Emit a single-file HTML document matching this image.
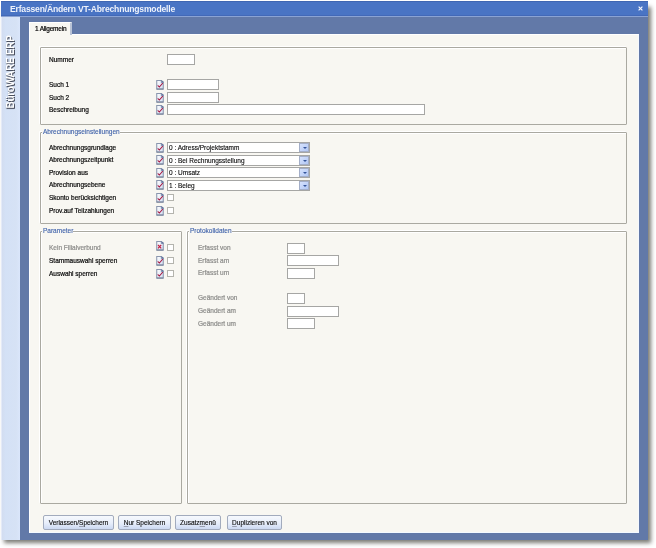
<!DOCTYPE html>
<html><head><meta charset="utf-8">
<style>
*{margin:0;padding:0;box-sizing:border-box}
html,body{width:656px;height:548px;overflow:hidden;background:#fff;font-family:"Liberation Sans",sans-serif}
#root{position:absolute;left:0;top:0;width:656px;height:548px;will-change:transform}
.l,.lg,#tab .t{-webkit-text-stroke-width:0.2px}
.cmb .t{-webkit-text-stroke-width:0.12px}
.btn{-webkit-text-stroke-width:0.12px}
.a{position:absolute}
#shadow{left:4px;top:7px;width:647px;height:536px;background:rgba(40,40,30,.62);filter:blur(2px)}
#win{left:1px;top:1px;width:647px;height:539px;background:#6279a8}
#title{left:1px;top:1px;width:647px;height:15px;background:#4974c4;border-top:1px solid #3f66b2;box-shadow:inset 0 -1px 0 #4269b8}
#title .t{left:9px;top:2px;font-size:8.6px;font-weight:bold;color:#eef2fb;letter-spacing:-0.2px;white-space:nowrap;line-height:11px}
#close{left:637px;top:5px;width:7px;height:7px}
#tline{left:1px;top:16px;width:647px;height:1px;background:#8aa3d4}
#side{left:1px;top:17px;width:19px;height:523px;background:linear-gradient(90deg,#d3dcef,#d4e1f6 25%,#d6e2f5 80%,#dae6fb)}
#side{box-shadow:inset 1px 0 0 #e4eaf8}
#sidetext{left:-27px;top:50px;width:73px;height:10px;transform:rotate(-90deg);font-size:10px;letter-spacing:-0.3px;font-weight:bold;color:#fff;text-shadow:-1px 1px 0 #4a5060,-1px 0 1px #707888;white-space:nowrap;line-height:10px;text-align:center}
#tab{left:29px;top:22px;width:43px;height:13px;background:#f8f7f2;border-top:1px solid #fff;border-left:1px solid #fff;border-right:2px solid #b9c3d6}
#tab .t{left:5px;top:2px;font-size:6.5px;color:#000;letter-spacing:-0.2px;line-height:8px;white-space:nowrap}
#panel{left:29px;top:34px;width:610px;height:499px;background:#f8f7f2;border-top:1px solid #fff;border-right:1px solid #f4f8ff;border-bottom:1px solid #f4faff;border-left:1px solid #fff}
.box{position:absolute;border:1px solid #aaa9a1;border-radius:1px;box-shadow:inset 1px 1px 0 #fff,-1px -1px 0 #fff}
.lg{position:absolute;font-size:6.5px;color:#3a5ea8;background:#f8f7f2;line-height:8px;white-space:nowrap;padding:0 0 0 1px;-webkit-text-stroke-width:0.1px !important}
.l{position:absolute;font-size:6.5px;color:#0a0a0a;line-height:8px;white-space:nowrap}
.g{color:#8c8c8a}
.in{position:absolute;background:#fff;border:1px solid #a6a6a4}
.cb{position:absolute;background:#fff;border:1px solid #b4b4ae}
.cmb{position:absolute;background:#fff;border:1px solid #a6a6a4}
.cmb .t{position:absolute;left:1px;top:1px;font-size:6.5px;line-height:8px;color:#0a0a0a;white-space:nowrap}
.cmb .dd{position:absolute;right:0;top:0;width:10px;height:100%;background:linear-gradient(135deg,#d6e2fd,#b2c7f4);border:1px solid #a3aec8}
.cmb .dd:after{content:"";position:absolute;left:2.5px;top:3px;border-left:2.2px solid transparent;border-right:2.2px solid transparent;border-top:2.2px solid #34549a}
.ic{position:absolute;width:8px;height:9.6px;overflow:visible}
.btn{position:absolute;top:515px;height:15px;border:1px solid #a2abbd;border-radius:2px;background:linear-gradient(#f6f9fe 0%,#e8eefa 55%,#ccd9f2 100%);font-size:6.5px;line-height:14px;text-align:center;color:#0a0a0a;white-space:nowrap}
.btn u{text-decoration:underline;text-decoration-color:#9aa0b0;text-decoration-thickness:0.5px}
</style></head><body><div id="root">
<div id="shadow" class="a"></div>
<div id="win" class="a"></div>
<div id="title" class="a"><div class="t a">Erfassen/Ändern VT-Abrechnungsmodelle</div></div>
<svg id="close" class="a" viewBox="0 0 7 7"><path d="M1.6 1.6L5.4 5.4M5.4 1.6L1.6 5.4" stroke="#f4f6fc" stroke-width="1.2"/></svg>
<div id="tline" class="a"></div>
<div id="side" class="a"><div id="sidetext" class="a">BüroWARE ERP</div></div>
<div id="panel" class="a"></div>
<div id="tab" class="a"><div class="t a">1 Allgemein</div></div>

<!-- Box 1 -->
<div class="box" style="left:40px;top:47px;width:587px;height:78px"></div>
<div class="l" style="left:49px;top:56px">Nummer</div>
<div class="in" style="left:167px;top:54px;width:28px;height:11px"></div>
<div class="l" style="left:49px;top:81px">Such 1</div>
<div class="in" style="left:167px;top:79px;width:52px;height:11px"></div>
<div class="l" style="left:49px;top:94px">Such 2</div>
<div class="in" style="left:167px;top:92px;width:52px;height:11px"></div>
<div class="l" style="left:49px;top:106px">Beschreibung</div>
<div class="in" style="left:167px;top:104px;width:258px;height:11px"></div>

<!-- Box 2 -->
<div class="box" style="left:40px;top:132px;width:587px;height:92px"></div>
<div class="lg" style="left:42px;top:128px">Abrechnungseinstellungen</div>
<div class="l" style="left:49px;top:144px">Abrechnungsgrundlage</div>
<div class="cmb" style="left:167px;top:142px;width:143px;height:11px"><div class="t">0 : Adress/Projektstamm</div><div class="dd"></div></div>
<div class="l" style="left:49px;top:156px">Abrechnungszeitpunkt</div>
<div class="cmb" style="left:167px;top:155px;width:143px;height:11px"><div class="t">0 : Bei Rechnungsstellung</div><div class="dd"></div></div>
<div class="l" style="left:49px;top:169px">Provision aus</div>
<div class="cmb" style="left:167px;top:167px;width:143px;height:11px"><div class="t">0 : Umsatz</div><div class="dd"></div></div>
<div class="l" style="left:49px;top:181px">Abrechnungsebene</div>
<div class="cmb" style="left:167px;top:180px;width:143px;height:11px"><div class="t">1 : Beleg</div><div class="dd"></div></div>
<div class="l" style="left:49px;top:194px">Skonto berücksichtigen</div>
<div class="cb" style="left:167px;top:194px;width:7px;height:7px"></div>
<div class="l" style="left:49px;top:207px">Prov.auf Teilzahlungen</div>
<div class="cb" style="left:167px;top:207px;width:7px;height:7px"></div>

<!-- Box 3 Parameter -->
<div class="box" style="left:40px;top:231px;width:142px;height:273px"></div>
<div class="lg" style="left:42px;top:227px">Parameter</div>
<div class="l g" style="left:49px;top:244px">Kein Filialverbund</div>
<div class="cb" style="left:167px;top:244px;width:7px;height:7px"></div>
<div class="l" style="left:49px;top:257px">Stammauswahl sperren</div>
<div class="cb" style="left:167px;top:257px;width:7px;height:7px"></div>
<div class="l" style="left:49px;top:270px">Auswahl sperren</div>
<div class="cb" style="left:167px;top:270px;width:7px;height:7px"></div>

<!-- Box 4 Protokolldaten -->
<div class="box" style="left:187px;top:231px;width:440px;height:273px"></div>
<div class="lg" style="left:189px;top:227px">Protokolldaten</div>
<div class="l g" style="left:198px;top:244px">Erfasst von</div>
<div class="in" style="left:287px;top:243px;width:18px;height:11px"></div>
<div class="l g" style="left:198px;top:257px">Erfasst am</div>
<div class="in" style="left:287px;top:255px;width:52px;height:11px"></div>
<div class="l g" style="left:198px;top:269px">Erfasst um</div>
<div class="in" style="left:287px;top:268px;width:28px;height:11px"></div>
<div class="l g" style="left:198px;top:294px">Geändert von</div>
<div class="in" style="left:287px;top:293px;width:18px;height:11px"></div>
<div class="l g" style="left:198px;top:307px">Geändert am</div>
<div class="in" style="left:287px;top:306px;width:52px;height:11px"></div>
<div class="l g" style="left:198px;top:320px">Geändert um</div>
<div class="in" style="left:287px;top:318px;width:28px;height:11px"></div>

<!-- icons -->
<svg class="ic" style="left:156px;top:80px" viewBox="0 0 8 10"><defs><linearGradient id="dg0" x1="0" y1="0" x2="1" y2="1"><stop offset="0" stop-color="#ffffff"/><stop offset="1" stop-color="#d2ddf2"/></linearGradient></defs><path d="M0.6 0.6H5.4L7.4 2.6V9.4H0.6Z" fill="url(#dg0)" stroke="#8a96ae" stroke-width="1.1"/><path d="M5.2 0.4L7.6 2.8V1.2Z" fill="#5c6e98"/><path d="M5.4 0.6V2.6H7.4" fill="none" stroke="#6c7ea6" stroke-width="0.9"/><path d="M0.4 9.5H7.6" stroke="#6c7890" stroke-width="1"/><path d="M1.9 5.9L3.3 7.3L6.6 3.6" fill="none" stroke="#a81c44" stroke-width="1.05" stroke-linecap="round"/></svg>
<svg class="ic" style="left:156px;top:92.5px" viewBox="0 0 8 10"><defs><linearGradient id="dg1" x1="0" y1="0" x2="1" y2="1"><stop offset="0" stop-color="#ffffff"/><stop offset="1" stop-color="#d2ddf2"/></linearGradient></defs><path d="M0.6 0.6H5.4L7.4 2.6V9.4H0.6Z" fill="url(#dg1)" stroke="#8a96ae" stroke-width="1.1"/><path d="M5.2 0.4L7.6 2.8V1.2Z" fill="#5c6e98"/><path d="M5.4 0.6V2.6H7.4" fill="none" stroke="#6c7ea6" stroke-width="0.9"/><path d="M0.4 9.5H7.6" stroke="#6c7890" stroke-width="1"/><path d="M1.9 5.9L3.3 7.3L6.6 3.6" fill="none" stroke="#a81c44" stroke-width="1.05" stroke-linecap="round"/></svg>
<svg class="ic" style="left:156px;top:105px" viewBox="0 0 8 10"><defs><linearGradient id="dg2" x1="0" y1="0" x2="1" y2="1"><stop offset="0" stop-color="#ffffff"/><stop offset="1" stop-color="#d2ddf2"/></linearGradient></defs><path d="M0.6 0.6H5.4L7.4 2.6V9.4H0.6Z" fill="url(#dg2)" stroke="#8a96ae" stroke-width="1.1"/><path d="M5.2 0.4L7.6 2.8V1.2Z" fill="#5c6e98"/><path d="M5.4 0.6V2.6H7.4" fill="none" stroke="#6c7ea6" stroke-width="0.9"/><path d="M0.4 9.5H7.6" stroke="#6c7890" stroke-width="1"/><path d="M1.9 5.9L3.3 7.3L6.6 3.6" fill="none" stroke="#a81c44" stroke-width="1.05" stroke-linecap="round"/></svg>
<svg class="ic" style="left:156px;top:142.5px" viewBox="0 0 8 10"><defs><linearGradient id="dg3" x1="0" y1="0" x2="1" y2="1"><stop offset="0" stop-color="#ffffff"/><stop offset="1" stop-color="#d2ddf2"/></linearGradient></defs><path d="M0.6 0.6H5.4L7.4 2.6V9.4H0.6Z" fill="url(#dg3)" stroke="#8a96ae" stroke-width="1.1"/><path d="M5.2 0.4L7.6 2.8V1.2Z" fill="#5c6e98"/><path d="M5.4 0.6V2.6H7.4" fill="none" stroke="#6c7ea6" stroke-width="0.9"/><path d="M0.4 9.5H7.6" stroke="#6c7890" stroke-width="1"/><path d="M1.9 5.9L3.3 7.3L6.6 3.6" fill="none" stroke="#a81c44" stroke-width="1.05" stroke-linecap="round"/></svg>
<svg class="ic" style="left:156px;top:155px" viewBox="0 0 8 10"><defs><linearGradient id="dg4" x1="0" y1="0" x2="1" y2="1"><stop offset="0" stop-color="#ffffff"/><stop offset="1" stop-color="#d2ddf2"/></linearGradient></defs><path d="M0.6 0.6H5.4L7.4 2.6V9.4H0.6Z" fill="url(#dg4)" stroke="#8a96ae" stroke-width="1.1"/><path d="M5.2 0.4L7.6 2.8V1.2Z" fill="#5c6e98"/><path d="M5.4 0.6V2.6H7.4" fill="none" stroke="#6c7ea6" stroke-width="0.9"/><path d="M0.4 9.5H7.6" stroke="#6c7890" stroke-width="1"/><path d="M1.9 5.9L3.3 7.3L6.6 3.6" fill="none" stroke="#a81c44" stroke-width="1.05" stroke-linecap="round"/></svg>
<svg class="ic" style="left:156px;top:167.5px" viewBox="0 0 8 10"><defs><linearGradient id="dg5" x1="0" y1="0" x2="1" y2="1"><stop offset="0" stop-color="#ffffff"/><stop offset="1" stop-color="#d2ddf2"/></linearGradient></defs><path d="M0.6 0.6H5.4L7.4 2.6V9.4H0.6Z" fill="url(#dg5)" stroke="#8a96ae" stroke-width="1.1"/><path d="M5.2 0.4L7.6 2.8V1.2Z" fill="#5c6e98"/><path d="M5.4 0.6V2.6H7.4" fill="none" stroke="#6c7ea6" stroke-width="0.9"/><path d="M0.4 9.5H7.6" stroke="#6c7890" stroke-width="1"/><path d="M1.9 5.9L3.3 7.3L6.6 3.6" fill="none" stroke="#a81c44" stroke-width="1.05" stroke-linecap="round"/></svg>
<svg class="ic" style="left:156px;top:180px" viewBox="0 0 8 10"><defs><linearGradient id="dg6" x1="0" y1="0" x2="1" y2="1"><stop offset="0" stop-color="#ffffff"/><stop offset="1" stop-color="#d2ddf2"/></linearGradient></defs><path d="M0.6 0.6H5.4L7.4 2.6V9.4H0.6Z" fill="url(#dg6)" stroke="#8a96ae" stroke-width="1.1"/><path d="M5.2 0.4L7.6 2.8V1.2Z" fill="#5c6e98"/><path d="M5.4 0.6V2.6H7.4" fill="none" stroke="#6c7ea6" stroke-width="0.9"/><path d="M0.4 9.5H7.6" stroke="#6c7890" stroke-width="1"/><path d="M1.9 5.9L3.3 7.3L6.6 3.6" fill="none" stroke="#a81c44" stroke-width="1.05" stroke-linecap="round"/></svg>
<svg class="ic" style="left:156px;top:193px" viewBox="0 0 8 10"><defs><linearGradient id="dg7" x1="0" y1="0" x2="1" y2="1"><stop offset="0" stop-color="#ffffff"/><stop offset="1" stop-color="#d2ddf2"/></linearGradient></defs><path d="M0.6 0.6H5.4L7.4 2.6V9.4H0.6Z" fill="url(#dg7)" stroke="#8a96ae" stroke-width="1.1"/><path d="M5.2 0.4L7.6 2.8V1.2Z" fill="#5c6e98"/><path d="M5.4 0.6V2.6H7.4" fill="none" stroke="#6c7ea6" stroke-width="0.9"/><path d="M0.4 9.5H7.6" stroke="#6c7890" stroke-width="1"/><path d="M1.9 5.9L3.3 7.3L6.6 3.6" fill="none" stroke="#a81c44" stroke-width="1.05" stroke-linecap="round"/></svg>
<svg class="ic" style="left:156px;top:205.7px" viewBox="0 0 8 10"><defs><linearGradient id="dg8" x1="0" y1="0" x2="1" y2="1"><stop offset="0" stop-color="#ffffff"/><stop offset="1" stop-color="#d2ddf2"/></linearGradient></defs><path d="M0.6 0.6H5.4L7.4 2.6V9.4H0.6Z" fill="url(#dg8)" stroke="#8a96ae" stroke-width="1.1"/><path d="M5.2 0.4L7.6 2.8V1.2Z" fill="#5c6e98"/><path d="M5.4 0.6V2.6H7.4" fill="none" stroke="#6c7ea6" stroke-width="0.9"/><path d="M0.4 9.5H7.6" stroke="#6c7890" stroke-width="1"/><path d="M1.9 5.9L3.3 7.3L6.6 3.6" fill="none" stroke="#a81c44" stroke-width="1.05" stroke-linecap="round"/></svg>
<svg class="ic" style="left:156px;top:241.3px" viewBox="0 0 8 10"><defs><linearGradient id="dg9" x1="0" y1="0" x2="1" y2="1"><stop offset="0" stop-color="#ffffff"/><stop offset="1" stop-color="#d2ddf2"/></linearGradient></defs><path d="M0.6 0.6H5.4L7.4 2.6V9.4H0.6Z" fill="url(#dg9)" stroke="#8a96ae" stroke-width="1.1"/><path d="M5.2 0.4L7.6 2.8V1.2Z" fill="#5c6e98"/><path d="M5.4 0.6V2.6H7.4" fill="none" stroke="#6c7ea6" stroke-width="0.9"/><path d="M0.4 9.5H7.6" stroke="#6c7890" stroke-width="1"/><path d="M1.9 4L5.3 7.6M5.3 4L1.9 7.6" fill="none" stroke="#c01c40" stroke-width="1.25"/></svg>
<svg class="ic" style="left:156px;top:256px" viewBox="0 0 8 10"><defs><linearGradient id="dg10" x1="0" y1="0" x2="1" y2="1"><stop offset="0" stop-color="#ffffff"/><stop offset="1" stop-color="#d2ddf2"/></linearGradient></defs><path d="M0.6 0.6H5.4L7.4 2.6V9.4H0.6Z" fill="url(#dg10)" stroke="#8a96ae" stroke-width="1.1"/><path d="M5.2 0.4L7.6 2.8V1.2Z" fill="#5c6e98"/><path d="M5.4 0.6V2.6H7.4" fill="none" stroke="#6c7ea6" stroke-width="0.9"/><path d="M0.4 9.5H7.6" stroke="#6c7890" stroke-width="1"/><path d="M1.9 5.9L3.3 7.3L6.6 3.6" fill="none" stroke="#a81c44" stroke-width="1.05" stroke-linecap="round"/></svg>
<svg class="ic" style="left:156px;top:268.7px" viewBox="0 0 8 10"><defs><linearGradient id="dg11" x1="0" y1="0" x2="1" y2="1"><stop offset="0" stop-color="#ffffff"/><stop offset="1" stop-color="#d2ddf2"/></linearGradient></defs><path d="M0.6 0.6H5.4L7.4 2.6V9.4H0.6Z" fill="url(#dg11)" stroke="#8a96ae" stroke-width="1.1"/><path d="M5.2 0.4L7.6 2.8V1.2Z" fill="#5c6e98"/><path d="M5.4 0.6V2.6H7.4" fill="none" stroke="#6c7ea6" stroke-width="0.9"/><path d="M0.4 9.5H7.6" stroke="#6c7890" stroke-width="1"/><path d="M1.9 5.9L3.3 7.3L6.6 3.6" fill="none" stroke="#a81c44" stroke-width="1.05" stroke-linecap="round"/></svg>

<!-- buttons -->
<div class="btn" style="left:43px;width:71px">Verlassen/<u>S</u>peichern</div>
<div class="btn" style="left:118px;width:53px"><u>N</u>ur Speichern</div>
<div class="btn" style="left:175px;width:46px">Zusatz<u>m</u>enü</div>
<div class="btn" style="left:227px;width:55px"><u>D</u>uplizieren von</div>
</div></body></html>
